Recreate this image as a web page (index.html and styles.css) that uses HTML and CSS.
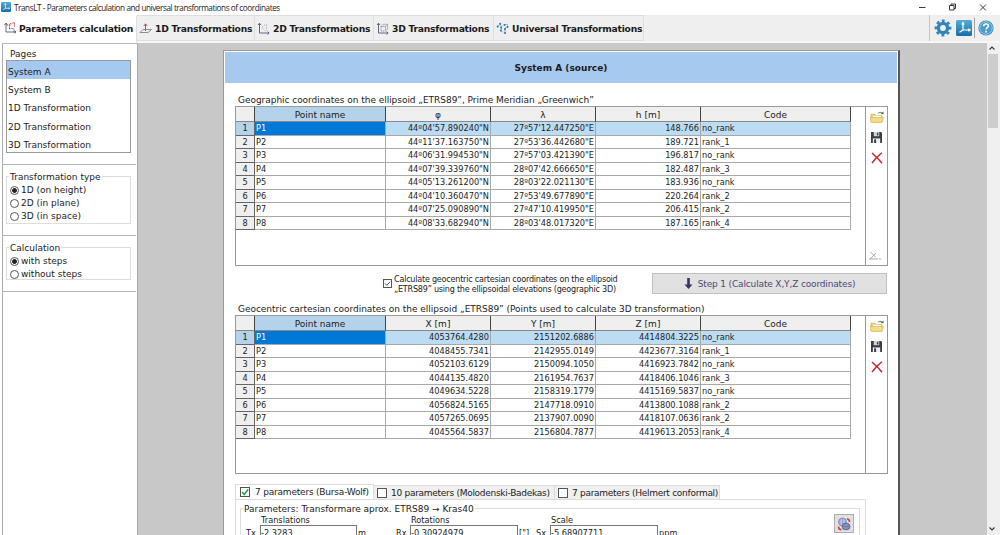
FILE: index.html
```html
<!DOCTYPE html>
<html lang="en">
<head>
  <meta charset="UTF-8">
  <title>TransLT</title>
  <link rel="stylesheet" href="styles.css">
</head>
<body>
  <svg class="defs" width="0" height="0">
    <defs>
      <linearGradient id="blue" x1="0" y1="0" x2="0" y2="1">
        <stop offset="0" stop-color="#4fb0d8"/>
        <stop offset="1" stop-color="#1a6ca8"/>
      </linearGradient>
    </defs>
    <symbol id="logo" viewBox="0 0 16 16">
      <rect width="16" height="16" rx="1.5" fill="url(#blue)"/>
      <path d="M7 3v7h6.500M7 10l-3.500 2.300M5.800 4.500L7 2.500l1.200 2M12.300 8.800l1.800 1.200-1.800 1.200" fill="none" stroke="#fff" stroke-width="1.200"/>
    </symbol>
    <symbol id="open" viewBox="0 0 14 12">
      <path d="M1 3.2h4l1 1.3h6V11H1z" fill="#e8cf78" stroke="#c9a94a" stroke-width=".6"/>
      <path d="M3 4.700h8v2.500H3z" fill="#fff"/>
      <path d="M0 6.5h13.4L12 11.4H1.3z" fill="#f7dc85" stroke="#d6b04c" stroke-width=".6"/>
      <path d="M8 2.4c1.2-1.4 2.6-1.4 4-.4" fill="none" stroke="#555" stroke-width=".8"/>
      <path d="M10.5 3l3 .3V.4z" fill="#2f7d3a"/>
    </symbol>
    <symbol id="save" viewBox="0 0 12 12">
      <path d="M0 0h11l1 1v11H0z" fill="#3a3d44"/>
      <path d="M3 0h6v4.600H3z" fill="#cfd3da"/>
      <path d="M6.500 .8h1.500v3H6.500z" fill="#3a3d44"/>
      <path d="M2 7h8v5H2z" fill="#eef0f3"/>
      <path d="M3.400 8h2.200v4H3.400z" fill="#3a3d44"/>
    </symbol>
    <symbol id="del" viewBox="0 0 12 12">
      <path d="M1 1c3 2.600 7 6.500 10 10.200M10.800 .8C7 4 3.500 7.500 1 11.200" fill="none" stroke="#c8262b" stroke-width="1.500"/>
    </symbol>
  </svg>

  <div class="titlebar">
    <svg class="app-icon" width="10" height="10"><use href="#logo"/></svg>
    <span class="app-title">TransLT - Parameters calculation and universal transformations of coordinates</span>
    <svg class="win-buttons" width="78" height="10" viewBox="0 0 78 10" fill="none" stroke="#222" stroke-width=".9">
      <path d="M0 5.500h6.500"/>
      <path d="M30.500 3.500h4.500v4.500h-4.500zM32 3.500V2h4.500v4.500H35"/>
      <path d="M61 2.500l6 6M67 2.500l-6 6"/>
    </svg>
  </div>

  <div class="tabs">
    <div class="tab tab1 active">
      <svg width="14" height="14" viewBox="0 0 14 14" fill="none">
        <path d="M3 2.500v8.500h10M1.500 4L3 2l1.500 2M11.500 9.500L13 11l-1.500 1.500" stroke="#56566e" stroke-width=".9"/>
        <path d="M3 4h5.500M6.500 8V3l5-1.500V6" stroke="#c45a5a" stroke-width=".9" stroke-dasharray="2 .6"/>
        <path d="M6 7.500h5V12" stroke="#56566e" stroke-width=".8" stroke-dasharray="1.500 .8"/>
      </svg>
      <span>Parameters calculation</span>
    </div>
    <div class="tab tab2">
      <svg width="13" height="13" viewBox="0 0 13 13" fill="none">
        <path d="M1 10.500L4 7.500h8.500L9 10.500z" stroke="#75757f" stroke-width=".8"/>
        <path d="M6.500 9V2M4.800 4l1.700-2.200L8.200 4" stroke="#c94a4a" stroke-width="1"/>
      </svg>
      <span>1D Transformations</span>
    </div>
    <div class="tab tab3">
      <svg width="13" height="13" viewBox="0 0 13 13" fill="none">
        <path d="M2.500 1.500v9.500H12M1 3l1.500-1.800L4 3M10.500 9.600l1.600 1.400-1.600 1.500" stroke="#56567a" stroke-width=".9"/>
        <path d="M5 5l4-3M4.500 5.500l4 3.500M9.500 2.500v6" stroke="#a0a0b0" stroke-width=".8" stroke-dasharray="1.500 1"/>
      </svg>
      <span>2D Transformations</span>
    </div>
    <div class="tab tab4">
      <svg width="13" height="13" viewBox="0 0 13 13" fill="none">
        <path d="M2.500 1.500v9.500H12M1 3l1.500-1.800L4 3M10.500 9.600l1.600 1.400-1.600 1.500" stroke="#56567a" stroke-width=".9"/>
        <path d="M5 4.500h4.500V9H5zM5 4.500L7 2.300h4.500V7L9.500 9M9.500 4.500l2-2.200" stroke="#77778c" stroke-width=".7" stroke-dasharray="1.500 .6"/>
      </svg>
      <span>3D Transformations</span>
    </div>
    <div class="tab tab5">
      <svg width="13" height="13" viewBox="0 0 13 13" fill="none">
        <path d="M1.500 5L4 2l2 3-1 3 2 3M8 3l3-1 1 3-3 1v4" stroke="#58829f" stroke-width=".8" stroke-dasharray="2 .8"/>
        <g fill="#2e79a8"><circle cx="1.700" cy="4.500" r="1.100"/><circle cx="4.200" cy="1.800" r="1"/><circle cx="5" cy="5.500" r="1"/><circle cx="4.800" cy="8.500" r="1"/><circle cx="8.500" cy="3" r="1"/><circle cx="11.500" cy="5" r="1"/><circle cx="9" cy="7" r="1"/><circle cx="9" cy="11" r="1.100"/></g>
      </svg>
      <span>Universal Transformations</span>
    </div>
    <div class="tools">
      <svg width="18" height="18" viewBox="0 0 18 18">
        <circle cx="9" cy="9" r="4.600" fill="none" stroke="#3186b8" stroke-width="3.400"/>
        <circle cx="9" cy="9" r="7.100" fill="none" stroke="#3186b8" stroke-width="2.600" stroke-dasharray="2.788 2.788" transform="rotate(-11 9 9)"/>
      </svg>
      <svg width="16" height="16"><use href="#logo"/></svg>
      <i class="sep"></i>
      <svg width="16" height="16" viewBox="0 0 16 16">
        <circle cx="8" cy="8" r="7.600" fill="#2d83b6"/>
        <circle cx="8" cy="8" r="6.300" fill="#459dca" stroke="#b9dcec" stroke-width=".8"/>
        <path d="M5.700 6.200C5.700 3.300 10.400 3.300 10.400 6c0 1.700-2.300 1.700-2.300 3.500M8.100 10.800v1.700" fill="none" stroke="#fff" stroke-width="1.600"/>
      </svg>
    </div>
  </div>

  <div class="main">
    <div class="sidebar">
      <div class="box pages">
        <div class="box-title">Pages</div>
        <div class="list">
          <div class="item selected">System A</div>
          <div class="item">System B</div>
          <div class="item">1D Transformation</div>
          <div class="item">2D Transformation</div>
          <div class="item">3D Transformation</div>
        </div>
      </div>
      <div class="box type">
        <div class="group">
          <div class="legend"><span>Transformation type</span></div>
          <div class="radio"><i class="dot on"></i>1D (on height)</div>
          <div class="radio"><i class="dot"></i>2D (in plane)</div>
          <div class="radio"><i class="dot"></i>3D (in space)</div>
        </div>
      </div>
      <div class="box calc">
        <div class="group">
          <div class="legend"><span>Calculation</span></div>
          <div class="radio"><i class="dot on"></i>with steps</div>
          <div class="radio"><i class="dot"></i>without steps</div>
        </div>
      </div>
    </div>

    <div class="view">
      <div class="sheet">
        <div class="sheet-head"><span>System A (source)</span></div>

        <div class="caption cap1"><span>Geographic coordinates on the ellipsoid „ETRS89”, Prime Meridian „Greenwich”</span></div>
        <div class="grid-box">
          <div class="grid" id="geo"></div>
          <div class="side-tools">
            <svg width="14" height="12"><use href="#open"/></svg>
            <svg width="11" height="11"><use href="#save"/></svg>
            <svg width="12" height="12"><use href="#del"/></svg>
            <svg class="angle" width="14" height="10" viewBox="0 0 14 10" fill="none" stroke="#aaa"><path d="M1 8h9M2 8l6-6M2.500 1l5 5M12 7v2"/></svg>
          </div>
        </div>

        <div class="step">
          <svg width="9" height="9" viewBox="0 0 9 9"><rect x=".5" y=".5" width="8" height="8" fill="#fff" stroke="#555"/><path d="M2 4.500l1.800 1.800L7.200 2.700" fill="none" stroke="#444" stroke-width=".9"/></svg>
          <div class="step-text"><span>Calculate geocentric cartesian coordinates on the ellipsoid</span><br><span>„ETRS89” using the ellipsoidal elevations (geographic 3D)</span></div>
          <div class="step-btn">
            <svg width="9" height="13" viewBox="0 0 9 13"><path d="M3.200 1h2.600v6.500H8.500L4.500 12 .5 7.500h2.700z" fill="#34346a"/></svg>
            <span>Step 1 (Calculate X,Y,Z coordinates)</span>
          </div>
        </div>

        <div class="caption cap2"><span>Geocentric cartesian coordinates on the ellipsoid „ETRS89” (Points used to calculate 3D transformation)</span></div>
        <div class="grid-box second">
          <div class="grid" id="xyz"></div>
          <div class="side-tools">
            <svg width="14" height="12"><use href="#open"/></svg>
            <svg width="11" height="11"><use href="#save"/></svg>
            <svg width="12" height="12"><use href="#del"/></svg>
          </div>
        </div>

        <div class="ptabs">
          <div class="ptab p1 on">
            <svg width="10" height="10" viewBox="0 0 10 10"><rect x=".5" y=".5" width="9" height="9" fill="#fff" stroke="#555"/><path d="M2 5l2.200 2.500L8.200 2.200" fill="none" stroke="#27a043" stroke-width="1.500"/></svg>
            <span>7 parameters (Bursa-Wolf)</span>
          </div>
          <div class="ptab p2"><i class="check"></i><span>10 parameters (Molodenski-Badekas)</span></div>
          <div class="ptab p3"><i class="check"></i><span>7 parameters (Helmert conformal)</span></div>
        </div>
        <div class="params">
          <div class="params-group">
            <div class="legend"><span>Parameters: Transformare aprox. ETRS89 → Kras40</span></div>
            <div class="fields">
              <div class="field f1"><b>Translations</b><label>Tx</label><i>-2.3283</i><em>m</em></div>
              <div class="field f2"><b>Rotations</b><label>Rx</label><i>-0.30924979</i><em>["]</em></div>
              <div class="field f3"><b>Scale</b><label>Sx</label><i>-5.68907711</i><em>ppm</em></div>
              <div class="globe-btn">
                <svg width="14" height="14" viewBox="0 0 14 14" fill="none">
                  <circle cx="5.500" cy="5" r="4" fill="#e4e8f6" stroke="#6f7fb5" stroke-width=".8"/>
                  <path d="M1.500 5h8M5.500 1v8M3.500 1.500c-1 2-1 5 0 7M7.500 1.500c1 2 1 5 0 7M2 3h7M2 7h7" stroke="#6f7fb5" stroke-width=".6"/>
                  <ellipse cx="9" cy="9.500" rx="4" ry="3.300" fill="#d5d9ea" stroke="#44508a" stroke-width=".8"/>
                  <path d="M5 9.500h8M9 6.200v6.600M7 6.500v6M11 6.500v6M5.500 8h7M5.500 11h7" stroke="#44508a" stroke-width=".6"/>
                  <path d="M10 2c2 0 2.500 1 2.500 3M1.500 9.500c0 2 1 3.200 3 3.200" stroke="#d23b3b" stroke-width="1.500"/>
                </svg>
              </div>
            </div>
          </div>
        </div>
      </div>
    </div>

    <div class="scroll">
      <svg width="10" height="10" viewBox="0 0 10 10"><path d="M2.500 6.500L5 4l2.500 2.500" fill="none" stroke="#333" stroke-width="1.100"/></svg>
      <div class="thumb"></div>
      <svg class="down" width="10" height="10" viewBox="0 0 10 10"><path d="M2.500 2.500L5 5l2.500-2.500" fill="none" stroke="#333" stroke-width="1.100"/></svg>
    </div>
  </div>

  <script src="script.js"></script>
</body>
</html>
```
FILE: styles.css
```css
* {
  box-sizing: border-box;
}

body {
  margin: 0;
  height: 535px;
  overflow: hidden;
  display: flex;
  flex-direction: column;
  background: #fff;
  color: #1c1c1c;
  font-family: "DejaVu Sans", Verdana, sans-serif;
  font-size: 9px;
}

svg {
  display: block;
  flex: none;
}

span {
  white-space: nowrap;
}

i, em {
  font-style: normal;
}

.defs {
  position: absolute;
}

/* title bar */
.titlebar {
  height: 15px;
  flex: none;
  display: flex;
  align-items: center;
  padding: 0 3px 1px 1px;
}

.app-title {
  margin-left: 3px;
  font: 8.2px "Open Sans", "Noto Sans", sans-serif;
  letter-spacing: -0.43px;
}

.win-buttons {
  margin-left: auto;
}

/* main tabs */
.tabs {
  height: 28px;
  flex: none;
  display: flex;
  background: #efefef;
  border-bottom: 2px solid #f7f7f7;
}

.tab {
  height: 26px;
  display: flex;
  align-items: center;
  padding: 1px 0 0 2px;
  gap: 3px;
  border: 1px solid #dedede;
  border-left: 0;
  font-size: 9.2px;
  font-weight: bold;
  letter-spacing: -0.25px;
}

.tab.active {
  height: 28px;
  background: #fff;
  border-color: #fff #dedede #fff #fff;
  padding: 0 0 2px 3px;
  gap: 2px;
}

.tab1 { width: 137px; }
.tab2 { width: 118px; }
.tab3 { width: 119px; }
.tab4 { width: 120px; }
.tab5 { width: 150px; }

.tools {
  margin-left: auto;
  width: 71px;
  height: 26px;
  display: flex;
  align-items: center;
  gap: 4px;
  padding-left: 4px;
  border-left: 1px solid #c4c4c4;
}

.sep {
  width: 1px;
  height: 20px;
  background: #a5a5a5;
  margin: 0 -1px 0 -2px;
}

/* body of the window */
.main {
  flex: 1;
  min-height: 0;
  display: flex;
}

.sidebar {
  width: 135px;
  margin-left: 2px;
  flex: none;
  border-left: 1px solid #aaa;
  border-top: 1px solid #bbb;
}

.box {
  border-bottom: 1px solid #b4b4b4;
  padding: 0 5px 0 3px;
  margin-right: 1px;
}

.pages { height: 121px; padding-top: 4px; }
.type { height: 71px; padding-top: 5px; }
.calc { height: 56px; padding-top: 5px; }

.box-title {
  padding-left: 4px;
  height: 12px;
  line-height: 13px;
}

.list {
  height: 93px;
  border: 1px solid #999;
}

.item {
  height: 18.2px;
  line-height: 22px;
  padding-left: 1px;
}

.item.selected {
  background: #a6c9f0;
}

.group {
  border: 1px solid #dcdcdc;
  padding-left: 3px;
  margin-top: 6px;
}

.type .group { height: 48px; }
.calc .group { height: 33px; }

.legend {
  height: 12px;
  line-height: 12px;
  margin: -6px 0 0 -1px;
}

.sidebar .legend {
  height: 13px;
}

.legend span {
  display: inline-block;
  background: #fff;
  padding: 0 1px;
}

.radio {
  height: 13px;
  line-height: 13px;
  display: flex;
  align-items: center;
  gap: 2px;
}

.dot {
  width: 9px;
  height: 9px;
  border: 1px solid #555;
  border-radius: 50%;
}

.dot.on {
  background: radial-gradient(circle, #222 0 2px, #fff 2.8px);
}

/* gray area with the sheet */
.view {
  width: 850px;
  flex: none;
  background: #c8c8c8;
  border-left: 1px solid #a8a8a8;
  padding: 7px 0 0 85px;
  overflow: hidden;
}

.sheet {
  width: 677px;
  height: 600px;
  background: #fff;
  border: 1px solid #999;
  border-right: 2px solid #555;
  padding: 1px 1px 0 1px;
}

.sheet-head {
  height: 31px;
  background: #a6c9f0;
  font-size: 9px;
  font-weight: bold;
  display: flex;
  align-items: center;
  justify-content: center;
}

.caption {
  padding-left: 13px;
  height: 12px;
  line-height: 12px;
}

.cap1 {
  margin-top: 11px;
  letter-spacing: -0.04px;
}

.cap2 {
  margin-top: 2px;
  letter-spacing: -0.03px;
}

.grid-box {
  width: 653px;
  height: 160px;
  margin-left: 10px;
  border: 1px solid #999;
  display: flex;
  font-size: 8.2px;
}

.grid-box.second {
  height: 159px;
}

.grid {
  width: 629px;
  flex: none;
}

.row {
  display: grid;
  grid-template-columns: 19px 131px 105px 105px 105px 150px;
  height: 13px;
  line-height: 12px;
}

.row:nth-child(even) {
  height: 14px;
  line-height: 13px;
}

.row > div {
  border-right: 1px solid #a8a8a8;
  border-bottom: 1px solid #a8a8a8;
  padding: 0 1px;
  white-space: nowrap;
}

.row .num {
  text-align: right;
}

.row .no {
  text-align: center;
  background: #efefef;
  border-color: #666;
}

.row.head {
  height: 15px;
}

.row.head > div {
  height: 15px;
  background: #efefef;
  border-right: 1px solid #444;
  border-bottom: 1px solid #888;
  text-align: center;
  line-height: 16px;
  font-size: 9px;
}

.row.head .name,
.row.current .no {
  background: #b4d3ea;
}

.row.current > div {
  background: #bcdcf4;
}

.row.current .name {
  background: #0078d7;
  color: #fff;
}

.side-tools {
  flex: 1;
  border-left: 1px solid #999;
  display: flex;
  flex-direction: column;
  align-items: center;
  padding-top: 4px;
  gap: 9px;
}

.angle {
  margin: auto 4px 4px 0;
}

.step {
  height: 35px;
  display: flex;
  align-items: center;
  padding-left: 158px;
}

.step-text {
  width: 260px;
  padding-left: 2px;
  font-size: 8.1px;
  letter-spacing: -0.24px;
  line-height: 10px;
}

.step-btn {
  width: 235px;
  height: 21px;
  background: #e1e1e1;
  border: 1px solid #c0c0c0;
  color: #4a4a72;
  letter-spacing: -0.15px;
  display: flex;
  align-items: center;
  justify-content: center;
  gap: 5px;
}

/* parameter tabs */
.ptabs {
  display: flex;
  align-items: flex-end;
  margin: 10px 0 0 10px;
  height: 15px;
}

.ptab {
  height: 14px;
  display: flex;
  align-items: center;
  gap: 4px;
  padding-left: 3px;
  background: #f0f0f0;
  border: 1px solid #dcdcdc;
  border-left: 0;
  border-bottom: 0;
  letter-spacing: -0.28px;
}

.ptab.on {
  height: 15px;
  background: #fff;
  border-left: 1px solid #dcdcdc;
  padding-left: 4px;
  gap: 5px;
  letter-spacing: -0.2px;
}

.p1 { width: 139px; }
.p2 { width: 181px; }
.p3 { width: 165px; }

.check {
  width: 10px;
  height: 10px;
  flex: none;
  border: 1px solid #555;
  background: #fff;
}

.params {
  width: 631px;
  height: 80px;
  margin-left: 10px;
  border: 1px solid #dcdcdc;
  padding: 8px 5px 0 4px;
}

.params-group {
  height: 60px;
  border: 1px solid #dcdcdc;
}

.params .legend {
  margin-left: 2px;
}

.fields {
  display: flex;
  font-size: 8.2px;
}

.field {
  display: grid;
  grid-template-rows: 10px 16px;
  align-content: start;
}

.field b {
  grid-column: 2 / 4;
  font-weight: normal;
  line-height: 10px;
  padding-left: 1px;
}

.field label {
  grid-column: 1;
  line-height: 17px;
}

.field i {
  border: 1px solid #777;
  line-height: 15px;
}

.field em {
  line-height: 17px;
  padding-left: 1px;
}

.f1 { grid-template-columns: 14px 97px 39px; padding-left: 5px; }
.f2 { grid-template-columns: 14px 108px 18px; }
.f3 { grid-template-columns: 14px 108px 30px; }

.globe-btn {
  width: 20px;
  height: 19px;
  margin-left: auto;
  margin-right: 5px;
  margin-top: -1px;
  background: #e1e1e1;
  border: 1px solid #adadad;
  display: flex;
  align-items: center;
  justify-content: center;
}

/* scroll bar */
.scroll {
  width: 13px;
  flex: none;
  background: #f0f0f0;
  display: flex;
  flex-direction: column;
}

.thumb {
  height: 74px;
  margin: 1px 2px 0 1px;
  background: #cdcdcd;
}

.down {
  margin-top: auto;
}
```
FILE: script.js
```js
const codes = ["no_rank", "rank_1", "no_rank", "rank_3", "no_rank", "rank_2", "rank_2", "rank_4"];

const geo = [
  ["44º04'57.890240\"N", "27º57'12.447250\"E", "148.766"],
  ["44º11'37.163750\"N", "27º53'36.442680\"E", "189.721"],
  ["44º06'31.994530\"N", "27º57'03.421390\"E", "196.817"],
  ["44º07'39.339760\"N", "28º07'42.666650\"E", "182.487"],
  ["44º05'13.261200\"N", "28º03'22.021130\"E", "183.936"],
  ["44º04'10.360470\"N", "27º53'49.677890\"E", "220.264"],
  ["44º07'25.090890\"N", "27º47'10.419950\"E", "206.415"],
  ["44º08'33.682940\"N", "28º03'48.017320\"E", "187.165"]
];

const xyz = [
  ["4053764.4280", "2151202.6886", "4414804.3225"],
  ["4048455.7341", "2142955.0149", "4423677.3164"],
  ["4052103.6129", "2150094.1050", "4416923.7842"],
  ["4044135.4820", "2161954.7637", "4418406.1046"],
  ["4049634.5228", "2158319.1779", "4415169.5837"],
  ["4056824.5165", "2147718.0910", "4413800.1088"],
  ["4057265.0695", "2137907.0090", "4418107.0636"],
  ["4045564.5837", "2156804.7877", "4419613.2053"]
];

function fillGrid(id, titles, data) {
  let html = '<div class="row head"><div></div><div class="name">Point name</div>';
  titles.forEach(t => html += `<div>${t}</div>`);
  html += '<div>Code</div></div>';

  data.forEach((values, i) => {
    html += `<div class="row${i === 0 ? " current" : ""}">`;
    html += `<div class="no">${i + 1}</div><div class="name">P${i + 1}</div>`;
    values.forEach(v => html += `<div class="num">${v}</div>`);
    html += `<div>${codes[i]}</div></div>`;
  });
  document.getElementById(id).innerHTML = html;
}

fillGrid("geo", ["φ", "λ", "h [m]"], geo);
fillGrid("xyz", ["X [m]", "Y [m]", "Z [m]"], xyz);
```
